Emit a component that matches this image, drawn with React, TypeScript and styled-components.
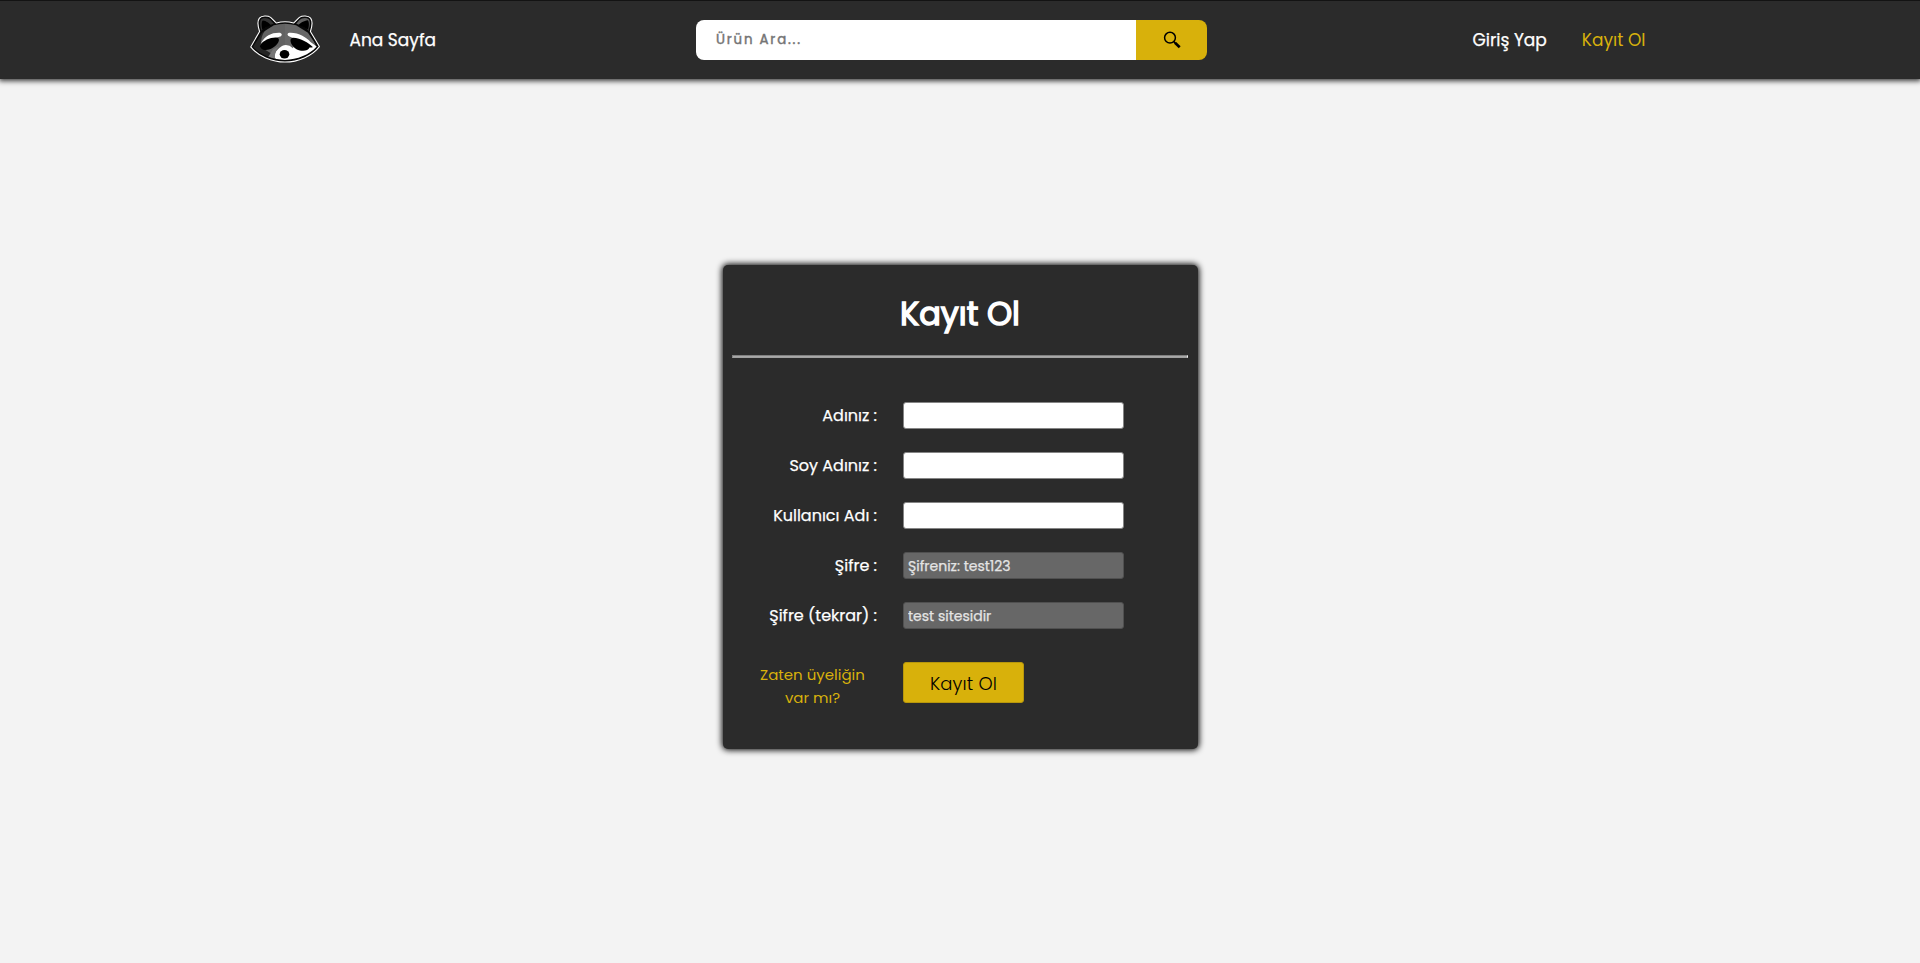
import React from 'react';
import styled, { createGlobalStyle } from 'styled-components';

const GlobalStyle = createGlobalStyle`
  * { box-sizing: border-box; }
  body {
    margin: 0;
    background: #f3f3f3;
    font-family: Poppins, Inter, "Noto Sans", sans-serif;
  }
  a { text-decoration: none; }
`;

const gold = '#d8b10b';
const dark = '#2b2b2b';

const Page = styled.div`
  min-height: 963px;
  display: flex;
  flex-direction: column;
`;

const Navbar = styled.header`
  height: 79px;
  flex: none;
  padding: 0 274.5px 0 250px;
  display: flex;
  align-items: center;
  background: ${dark};
  border-top: 1px solid #131313;
  box-shadow: 0 1px 5px 1px #000000c0;
`;

const Logo = styled.svg`
  width: 71px;
  height: 48px;
  margin-top: -1px;
  overflow: visible;
`;

const NavLink = styled.a<{ $active?: boolean }>`
  font-size: 17px;
  line-height: 26px;
  font-weight: 400;
  color: ${p => (p.$active ? gold : '#fff')};
  -webkit-text-stroke: ${p => (p.$active ? 0 : 0.25)}px;
  white-space: nowrap;
`;

const HomeSlot = styled.div`
  margin-left: 28.5px;
  width: 346.5px;
`;

const Search = styled.form`
  display: flex;
  width: 511px;
  height: 40px;
  margin-top: -1px;
  border-radius: 8px;
  overflow: hidden;
`;

const SearchInput = styled.input`
  flex: 1;
  min-width: 0;
  border: 0;
  outline: 0;
  padding: 1px 20px 0;
  background: #fff;
  font: 400 13.33px Poppins, Inter, sans-serif;
  letter-spacing: 1.8px;
  &::placeholder {
    color: #757575;
    -webkit-text-stroke: 0.45px #757575;
  }
`;

const SearchButton = styled.button`
  width: 71px;
  border: 0;
  padding: 0;
  display: flex;
  align-items: center;
  justify-content: center;
  background: ${gold};
`;

const Account = styled.nav`
  margin-left: auto;
  display: flex;
  gap: 35px;
`;

const Card = styled.main`
  width: 475px;
  height: 484.5px;
  margin: 185.5px auto 0;
  padding: 0 9.5px;
  border-radius: 5px;
  background: ${dark};
  box-shadow: 0 0 6px 1px #000;
`;

const Title = styled.h1`
  margin: 0;
  padding-top: 24.5px;
  height: 90.5px;
  font-size: 32px;
  line-height: 50px;
  font-weight: 400;
  -webkit-text-stroke: 1.4px;
  text-align: center;
  color: #fff;
`;

const Rule = styled.hr`
  margin: 0;
  height: 3px;
  border: 1px solid;
  border-color: #808080 #eee #a0a0a0 #808080;
  background: #a8a8a8;
`;

const Fields = styled.div`
  padding-top: 44px;
  display: flex;
  flex-direction: column;
  gap: 23px;
`;

const Field = styled.div`
  display: grid;
  grid-template-columns: 145px 221px;
  column-gap: 26px;
  align-items: center;
  height: 27px;
`;

const Label = styled.label`
  font-size: 16px;
  line-height: 24px;
  -webkit-text-stroke: 0.25px;
  text-align: right;
  white-space: nowrap;
  color: #fff;
`;

const TextInput = styled.input`
  width: 221px;
  height: 27px;
  padding: 2px 4px 0;
  border: 1px solid #858585;
  border-radius: 3px;
  outline: 0;
  background: #fff;
  color: #e4e4e4;
  font: 400 14px Poppins, Inter, sans-serif;
  &:disabled {
    background: #676767;
    border-color: #505050;
    -webkit-text-stroke: 0.25px;
  }
`;

const Actions = styled.div`
  display: flex;
  align-items: flex-start;
  margin-top: 33px;
`;

const LoginLink = styled.a`
  width: 116px;
  margin: 1px 32.5px 0 22.5px;
  display: flex;
  flex-direction: column;
  font-size: 15px;
  line-height: 23px;
  text-align: center;
  color: ${gold};
`;

const Submit = styled.button`
  width: 121px;
  height: 41px;
  padding: 2px 0 0;
  border: 1px solid #b8970c;
  border-radius: 3px;
  background: ${gold};
  color: #000;
  font: 300 18px Poppins, Inter, sans-serif;
  letter-spacing: 0.15px;
`;

const head =
  'M.7 31.6 L9.6 15.8 C7.6 10 7.4 5 9.4 2.2 C11.6 -.6 18 -.4 20.6 1.4 L26.4 7.2 Q35 4.6 43.6 7.2 L49.4 1.4 C52 -.4 58.4 -.6 60.6 2.2 C62.6 5 62.4 10 60.4 15.8 L69.4 31.2 C62 41 48 47 35 47 C22 47 8 41 .7 31.6 Z';

const Raccoon = () => (
  <Logo viewBox="0 0 71 49" preserveAspectRatio="none" aria-label="Logo">
    <defs>
      <clipPath id="face">
        <path d="M3 31.4 L12 17 L24 9.4 Q35 6.2 46 9.4 L58 17 L67 31 C60 39.4 47 44.8 35 44.8 C23 44.8 10 39.6 3 31.4 Z" />
      </clipPath>
    </defs>
    <path d={head} fill="#080808" stroke="#fff" strokeWidth="1.1" strokeLinejoin="round" />
    <path d="M11.5 15 C9.7 9 9.8 4.4 11.5 3 C14 1.4 18.6 2 20.5 4.2 L23.8 8 C18 9.4 14 12 11.5 15 Z" fill="#333" />
    <path d="M58.5 15 C60.3 9 60.2 4.4 58.5 3 C56 1.4 51.4 2 49.5 4.2 L46.2 8 C52 9.4 56 12 58.5 15 Z" fill="#626262" />
    <path d="M12.3 14 C11.2 8.6 11.6 5 13 4.6 C16 5 19.8 7.4 20.7 9.4 Q15.2 11 12.3 14 Z" fill="#000" />
    <path d="M58.3 14.4 C59.4 8.8 59 5 57.7 4.4 C54 4.8 50 7.3 48.6 9.4 Q54.6 11 58.3 14.4 Z" fill="#000" />
    <g clipPath="url(#face)">
      <path d="M0 0 H35 V48 H0 Z" fill="#252525" />
      <path d="M11 32 C10 19 15 8 35 6 V35 L24 40 Z" fill="#626262" />
      <path d="M35 6 C51 7 61 16 66 31 L55 34 L35 32 Z" fill="#686868" />
      <path d="M11 28 C15 20 22 16.8 30 17.2 Q33 18.4 31 20.6 L27 22 L12 31 Q9.8 31.5 11 28 Z" fill="#fff" />
      <path d="M38.4 17.3 C48 16.4 56.5 22 60.5 26.5 L67 31.5 C60 41 48 45.5 35 45.5 C30 45.5 26 44.5 24.5 43 Q23.4 36 32 30.5 Q38 28 43 33 L46 23.8 L40 21.3 Q36 19.6 38.4 17.3 Z" fill="#fff" />
      <path d="M23 34 L29 31 Q24.5 36 24.8 44 L18 42 Z" fill="#777" />
    </g>
    <path d="M10.3 29.2 C13.5 25.2 20 21.8 26 22 C29.5 22.2 29.8 25 27.5 28.2 C23 34.5 15 36.4 11.3 33.2 Q9 31.2 10.3 29.2 Z" fill="#000" />
    <path d="M43 22.2 C51 22.4 58.5 27.6 62.5 31.4 Q64 32.3 59.5 32.2 C57.8 36.4 50 36.5 45 32.8 C40.5 29.3 38.6 22.5 43 22.2 Z" fill="#000" />
    <ellipse cx="34.5" cy="39" rx="4.8" ry="4.3" fill="#000" />
  </Logo>
);

const fields = [
  { id: 'name', label: 'Adınız :' },
  { id: 'surname', label: 'Soy Adınız :' },
  { id: 'username', label: 'Kullanıcı Adı :' },
  { id: 'password', label: 'Şifre :', value: 'Şifreniz: test123' },
  { id: 'repeat', label: 'Şifre (tekrar) :', value: 'test sitesidir' },
];

export default function App() {
  return (
    <Page>
      <GlobalStyle />
      <Navbar>
        <Raccoon />
        <HomeSlot>
          <NavLink href="#">Ana Sayfa</NavLink>
        </HomeSlot>
        <Search>
          <SearchInput placeholder="Ürün Ara..." />
          <SearchButton type="button" aria-label="Ara">
            <svg width="18" height="18" viewBox="0 0 18 18" fill="none" stroke="#000">
              <circle cx="7" cy="6.7" r="5.4" strokeWidth="1.5" />
              <path d="M10.8 10.6 L12.3 12.1" strokeWidth="1.5" />
              <path d="M12 11.8 L16.7 16.3" strokeWidth="2.7" />
            </svg>
          </SearchButton>
        </Search>
        <Account>
          <NavLink href="#">Giriş Yap</NavLink>
          <NavLink href="#" $active>Kayıt Ol</NavLink>
        </Account>
      </Navbar>
      <Card>
        <Title>Kayıt Ol</Title>
        <Rule />
        <Fields>
          {fields.map(f => (
            <Field key={f.id}>
              <Label htmlFor={f.id}>{f.label}</Label>
              <TextInput id={f.id} defaultValue={f.value} disabled={f.value !== undefined} />
            </Field>
          ))}
        </Fields>
        <Actions>
          <LoginLink href="#">
            <span>Zaten üyeliğin</span>
            <span>var mı?</span>
          </LoginLink>
          <Submit type="button">Kayıt Ol</Submit>
        </Actions>
      </Card>
    </Page>
  );
}
